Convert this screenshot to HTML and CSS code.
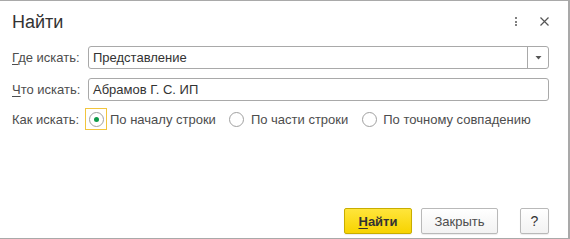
FILE: index.html
```html
<!DOCTYPE html>
<html lang="ru">
<head>
<meta charset="utf-8">
<title>Найти</title>
<link rel="stylesheet" href="styles.css">
</head>
<body>
<div class="dialog">
  <div class="header">
    <div class="title">Найти</div>
    <div class="header-tools">
      <span class="more"><i></i><i></i><i></i></span>
      <svg class="close" width="9" height="9" viewBox="0 0 9 9"><path d="M0.5 0.5 L8.5 8.5 M8.5 0.5 L0.5 8.5" stroke="#555" stroke-width="1.2" fill="none"/></svg>
    </div>
  </div>
  <div class="form">
    <label class="label"><u>Г</u>де искать:</label>
    <div class="field select">
      <span class="value">Представление</span>
      <span class="drop"><svg width="7" height="4" viewBox="0 0 7 4"><path d="M0.5 0 H6.5 L3.5 3.5 Z" fill="#555"/></svg></span>
    </div>
    <label class="label"><u>Ч</u>то искать:</label>
    <div class="field">
      <span class="value">Абрамов Г. С. ИП</span>
    </div>
    <label class="label label-radio">Как искать:</label>
    <div class="radios">
      <div class="opt">
        <span class="rbox focused"><span class="radio checked"></span></span>
        <span class="otext">По началу строки</span>
      </div>
      <div class="opt">
        <span class="rbox"><span class="radio"></span></span>
        <span class="otext">По части строки</span>
      </div>
      <div class="opt">
        <span class="rbox"><span class="radio"></span></span>
        <span class="otext">По точному совпадению</span>
      </div>
    </div>
  </div>
  <div class="footer">
    <button class="btn primary"><u>Н</u>айти</button>
    <button class="btn close-btn">Закрыть</button>
    <button class="btn help">?</button>
  </div>
</div>
</body>
</html>
```
FILE: styles.css
```css
html, body {
  margin: 0;
  padding: 0;
  background: #fff;
}
body {
  font-family: "Liberation Sans", Arial, sans-serif;
  font-size: 13px;
  color: #4d4d4d;
}
.dialog {
  box-sizing: border-box;
  width: 570px;
  height: 239px;
  border-top: 1px solid #a9a9a9;
  border-right: 2px solid #a9a9a9;
  border-bottom: 1px solid #a9a9a9;
  display: flex;
  flex-direction: column;
}
.header {
  height: 45px;
  display: flex;
  align-items: flex-start;
  justify-content: space-between;
}
.title {
  font-size: 18px;
  line-height: 20px;
  color: #333;
  padding: 11px 0 0 12px;
}
.header-tools {
  display: flex;
  align-items: center;
  padding: 16px 19px 0 0;
  height: 9px;
}
.more {
  display: flex;
  flex-direction: column;
  gap: 1.5px;
  margin-right: 23px;
}
.more i {
  display: block;
  width: 2px;
  height: 2px;
  background: #808080;
}
.close {
  display: block;
}
.form {
  display: grid;
  grid-template-columns: 76px 461px;
  grid-template-rows: 23px 23px 22px;
  row-gap: 9px;
  padding-left: 12px;
  align-items: center;
}
.label {
  color: #4d4d4d;
  line-height: 23px;
  white-space: nowrap;
}
.label-radio {
  margin-top: -4px;
}
.label u {
  text-decoration-thickness: 1px;
  text-underline-offset: 2px;
}
.field {
  box-sizing: border-box;
  height: 23px;
  border: 1px solid #a9a9a9;
  border-radius: 3px;
  display: flex;
  align-items: center;
  background: #fff;
}
.value {
  flex: 1;
  padding-left: 4px;
  color: #333;
  line-height: 21px;
  white-space: nowrap;
}
.drop {
  width: 20px;
  height: 21px;
  border-left: 1px solid #a9a9a9;
  display: flex;
  align-items: center;
  justify-content: center;
}
.drop svg {
  display: block;
}
.radios {
  display: flex;
  align-items: center;
  gap: 10px;
  margin-left: -3px;
  margin-top: -4px;
}
.opt {
  display: flex;
  align-items: center;
}
.rbox {
  box-sizing: border-box;
  width: 22px;
  height: 22px;
  border: 1px solid transparent;
  display: flex;
  align-items: center;
  justify-content: center;
}
.rbox.focused {
  border-color: #f2c53d;
}
.radio {
  box-sizing: border-box;
  width: 15px;
  height: 15px;
  border: 1px solid #a0a0a0;
  border-radius: 50%;
  background: #fff;
  display: flex;
  align-items: center;
  justify-content: center;
}
.radio.checked::after {
  content: "";
  width: 5px;
  height: 5px;
  border-radius: 50%;
  background: #0f9a48;
}
.otext {
  margin-left: 3px;
  color: #4d4d4d;
  white-space: nowrap;
}
.footer {
  margin-top: auto;
  display: flex;
  justify-content: flex-end;
  padding: 0 19px 4px 0;
}
.btn {
  box-sizing: border-box;
  height: 26px;
  font-family: "Liberation Sans", Arial, sans-serif;
  font-size: 13px;
  color: #4d4d4d;
  border: 1px solid #b9b9b9;
  border-radius: 2px;
  background: linear-gradient(#ffffff, #f2f2f2);
  box-shadow: 0 1px 1px rgba(0,0,0,0.08);
  padding: 0;
  cursor: pointer;
}
.btn.primary {
  width: 68px;
  font-weight: bold;
  color: #333;
  background: linear-gradient(#ffe53b, #f7d300);
  border-color: #c8ad00;
}
.btn.primary u {
  text-underline-offset: 2px;
}
.btn.close-btn {
  width: 77px;
  margin-left: 9px;
}
.btn.help {
  width: 29px;
  margin-left: 22px;
  color: #333;
  font-size: 14px;
}
```
